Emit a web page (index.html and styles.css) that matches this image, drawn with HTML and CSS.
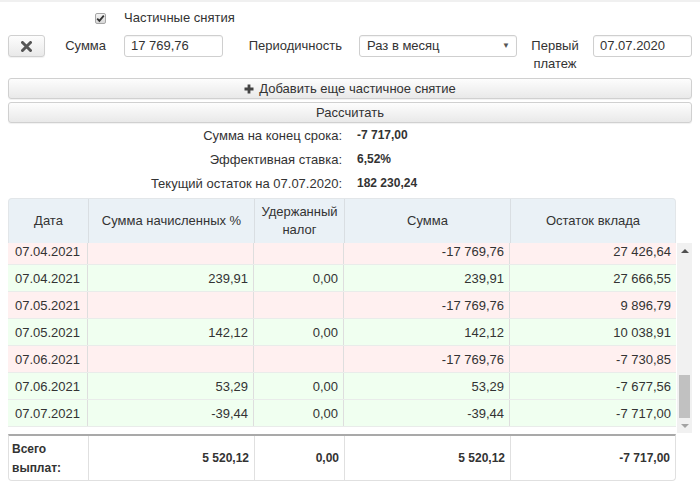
FILE: index.html
```html
<!DOCTYPE html>
<html lang="ru">
<head>
<meta charset="utf-8">
<title>Частичные снятия</title>
<link rel="stylesheet" href="styles.css">
</head>
<body>
<div class="page">
  <div class="form">
    <div class="cb-cell"><span class="checkbox"><svg width="9" height="9" viewBox="0 0 9 9"><path d="M1.2 4.6 L3.4 6.8 L7.8 1.6" fill="none" stroke="#333" stroke-width="1.8"/></svg></span></div>
    <div class="cb-label">Частичные снятия</div>

    <button class="btn btn-remove" type="button"><svg width="11" height="11" viewBox="0 0 11 11"><path d="M1.5 1.5 L9.5 9.5 M9.5 1.5 L1.5 9.5" stroke="#555" stroke-width="3" stroke-linecap="round"/></svg></button>
    <div class="lbl lbl-sum">Сумма</div>
    <div class="input in-sum">17 769,76</div>
    <div class="lbl lbl-period">Периодичность</div>
    <div class="select"><span>Раз в месяц</span><span class="caret">▼</span></div>
    <div class="lbl lbl-first">Первый платеж</div>
    <div class="input in-date">07.07.2020</div>
  </div>

  <button class="btn btn-full btn-add" type="button"><svg width="10" height="10" viewBox="0 0 10 10"><path d="M3.6 0.5 H6.4 V3.6 H9.5 V6.4 H6.4 V9.5 H3.6 V6.4 H0.5 V3.6 H3.6 Z" fill="#444"/></svg><span>Добавить еще частичное снятие</span></button>
  <button class="btn btn-full btn-calc" type="button">Рассчитать</button>

  <div class="summary">
    <div class="s-label">Сумма на конец срока:</div><div class="s-value">-7 717,00</div>
    <div class="s-label">Эффективная ставка:</div><div class="s-value">6,52%</div>
    <div class="s-label">Текущий остаток на 07.07.2020:</div><div class="s-value">182 230,24</div>
  </div>

  <div class="table">
    <div class="thead">
      <div class="th">Дата</div>
      <div class="th">Сумма начисленных %</div>
      <div class="th">Удержанный<br>налог</div>
      <div class="th">Сумма</div>
      <div class="th">Остаток вклада</div>
    </div>
    <div class="tbody-wrap">
      <div class="tbody">
        <div class="tr neg"><div class="td date">07.04.2021</div><div class="td"></div><div class="td"></div><div class="td">-17 769,76</div><div class="td">27 426,64</div></div>
        <div class="tr pos"><div class="td date">07.04.2021</div><div class="td">239,91</div><div class="td">0,00</div><div class="td">239,91</div><div class="td">27 666,55</div></div>
        <div class="tr neg"><div class="td date">07.05.2021</div><div class="td"></div><div class="td"></div><div class="td">-17 769,76</div><div class="td">9 896,79</div></div>
        <div class="tr pos"><div class="td date">07.05.2021</div><div class="td">142,12</div><div class="td">0,00</div><div class="td">142,12</div><div class="td">10 038,91</div></div>
        <div class="tr neg"><div class="td date">07.06.2021</div><div class="td"></div><div class="td"></div><div class="td">-17 769,76</div><div class="td">-7 730,85</div></div>
        <div class="tr pos"><div class="td date">07.06.2021</div><div class="td">53,29</div><div class="td">0,00</div><div class="td">53,29</div><div class="td">-7 677,56</div></div>
        <div class="tr pos"><div class="td date">07.07.2021</div><div class="td">-39,44</div><div class="td">0,00</div><div class="td">-39,44</div><div class="td">-7 717,00</div></div>
      </div>
      <div class="scrollbar">
        <div class="sb-arrow sb-up"></div>
        <div class="sb-track"><div class="sb-thumb"></div></div>
        <div class="sb-arrow sb-down"></div>
      </div>
    </div>
    <div class="tfoot">
      <div class="tf tf-label">Всего<br>выплат:</div>
      <div class="tf">5 520,12</div>
      <div class="tf">0,00</div>
      <div class="tf">5 520,12</div>
      <div class="tf">-7 717,00</div>
    </div>
  </div>
</div>
</body>
</html>
```

FILE: styles.css
```css
* { box-sizing: border-box; }

html, body {
  margin: 0;
  padding: 0;
  background: #ffffff;
  overflow: hidden;
}

body {
  font-family: "Liberation Sans", Arial, sans-serif;
  font-size: 13px;
  color: #333;
}

.page {
  width: 700px;
  padding: 6px 8px 0 8px;
  border-top: 2px solid #f0f0f0;
}

/* ---------- form ---------- */
.form {
  display: grid;
  grid-template-columns: 37px 79px 99px 136px 158px 76px 99px;
  grid-template-rows: 20px auto;
  row-gap: 7px;
  align-items: start;
}

.cb-cell {
  grid-column: 2;
  grid-row: 1;
  height: 20px;
  display: flex;
  align-items: center;
  justify-content: flex-end;
  padding-right: 18px;
}

.checkbox {
  width: 11px;
  height: 11px;
  border: 1px solid #a6a6a6;
  border-radius: 2px;
  background: linear-gradient(#f4f4f4, #d8d8d8);
  display: flex;
  align-items: center;
  justify-content: center;
}

.cb-label {
  grid-column: 3 / 6;
  grid-row: 1;
  line-height: 20px;
}

.btn {
  font-family: inherit;
  font-size: 13px;
  color: #333;
  border: 1px solid #d0d0d0;
  border-radius: 3px;
  background: linear-gradient(#fdfdfd, #e9e9e9);
  box-shadow: 0 1px 1px rgba(0,0,0,0.06);
  padding: 0;
  margin: 0;
  cursor: pointer;
}

.btn-remove {
  grid-column: 1;
  grid-row: 2;
  width: 37px;
  height: 22px;
  display: flex;
  align-items: center;
  justify-content: center;
}

.lbl {
  grid-row: 2;
  line-height: 22px;
  text-align: right;
}
.lbl-sum { grid-column: 2; padding-right: 18px; }
.lbl-period { grid-column: 4; padding-right: 17px; }
.lbl-first {
  grid-column: 6;
  text-align: center;
  line-height: 18px;
  padding: 2px 10px 0 10px;
}

.input, .select {
  grid-row: 2;
  height: 22px;
  border: 1px solid #cfcfcf;
  border-radius: 3px;
  background: #fff;
  box-shadow: inset 0 1px 1px rgba(0,0,0,0.05);
  line-height: 20px;
  padding: 0 6px;
  white-space: nowrap;
}
.in-sum { grid-column: 3; }
.in-date { grid-column: 7; }

.select {
  grid-column: 5;
  display: flex;
  justify-content: space-between;
  align-items: center;
  padding: 0 6px 0 7px;
}
.caret {
  font-size: 8px;
  color: #555;
}

/* ---------- full-width buttons ---------- */
.btn-full {
  display: flex;
  width: 684px;
  height: 21px;
  align-items: center;
  justify-content: center;
  gap: 5px;
}
.btn-add { margin-top: 5px; }
.btn-calc { margin-top: 3px; }

/* ---------- summary ---------- */
.summary {
  display: grid;
  grid-template-columns: 334px auto;
  column-gap: 15px;
  grid-auto-rows: 24px;
  align-items: center;
}
.s-label { text-align: right; }
.s-value { font-weight: bold; font-size: 12px; }

/* ---------- table ---------- */
.table {
  margin-top: 3px;
  width: 684px;
}

.thead, .tr, .tfoot {
  display: grid;
  grid-template-columns: 80px 166px 90px 166px 1fr;
}

.thead {
  width: 668px;
  height: 45px;
  background: #eaf1f6;
  border: 1px solid #e2e6e9;
  border-bottom: none;
  border-radius: 4px 4px 0 0;
}
.th {
  display: flex;
  align-items: center;
  justify-content: center;
  text-align: center;
  line-height: 18px;
  border-right: 1px solid #d9dee2;
}
.th:last-child { border-right: none; }

.tbody-wrap {
  display: flex;
  height: 190px;
  gap: 1px;
}

.tbody {
  width: 668px;
  height: 190px;
  overflow: hidden;
  display: flex;
  flex-direction: column;
  justify-content: flex-end;
  padding-bottom: 6px;
}

.tr {
  flex: 0 0 27px;
  height: 27px;
  border-bottom: 1px solid #e9ecea;
}
.tr.neg { background: #fff0f0; }
.tr.pos { background: #f0fff0; }

.td {
  display: flex;
  align-items: center;
  justify-content: flex-end;
  padding-right: 5px;
  border-right: 1px solid #dedede;
  white-space: nowrap;
}
.td:last-child { border-right: none; }
.td.date {
  justify-content: center;
  padding: 0;
}

.scrollbar {
  width: 15px;
  height: 190px;
  background: #f1f1f1;
  display: flex;
  flex-direction: column;
}
.sb-arrow {
  height: 15px;
  display: flex;
  align-items: center;
  justify-content: center;
}
.sb-up::before {
  content: "";
  border-left: 4px solid transparent;
  border-right: 4px solid transparent;
  border-bottom: 4px solid #505050;
}
.sb-down::before {
  content: "";
  border-left: 4px solid transparent;
  border-right: 4px solid transparent;
  border-top: 4px solid #a3a3a3;
}
.sb-track {
  flex: 1;
  display: flex;
  flex-direction: column;
  justify-content: flex-end;
  padding: 0 2px;
}
.sb-thumb {
  height: 43px;
  background: #c1c1c1;
}

.tfoot {
  width: 668px;
  margin-top: 1px;
  height: 47px;
  border-top: 2px solid #a9a9a9;
  border-left: 1px solid #e0e0e0;
  border-right: 1px solid #e0e0e0;
  border-bottom: 1px solid #e0e0e0;
  border-radius: 0 0 4px 4px;
  font-weight: bold;
  font-size: 12px;
}
.tf {
  display: flex;
  align-items: center;
  justify-content: flex-end;
  padding-right: 5px;
  border-right: 1px solid #e0e0e0;
}
.tf:last-child { border-right: none; }
.tf-label {
  justify-content: flex-start;
  align-items: flex-start;
  padding: 4px 3px 0 3px;
  line-height: 19px;
}
```
